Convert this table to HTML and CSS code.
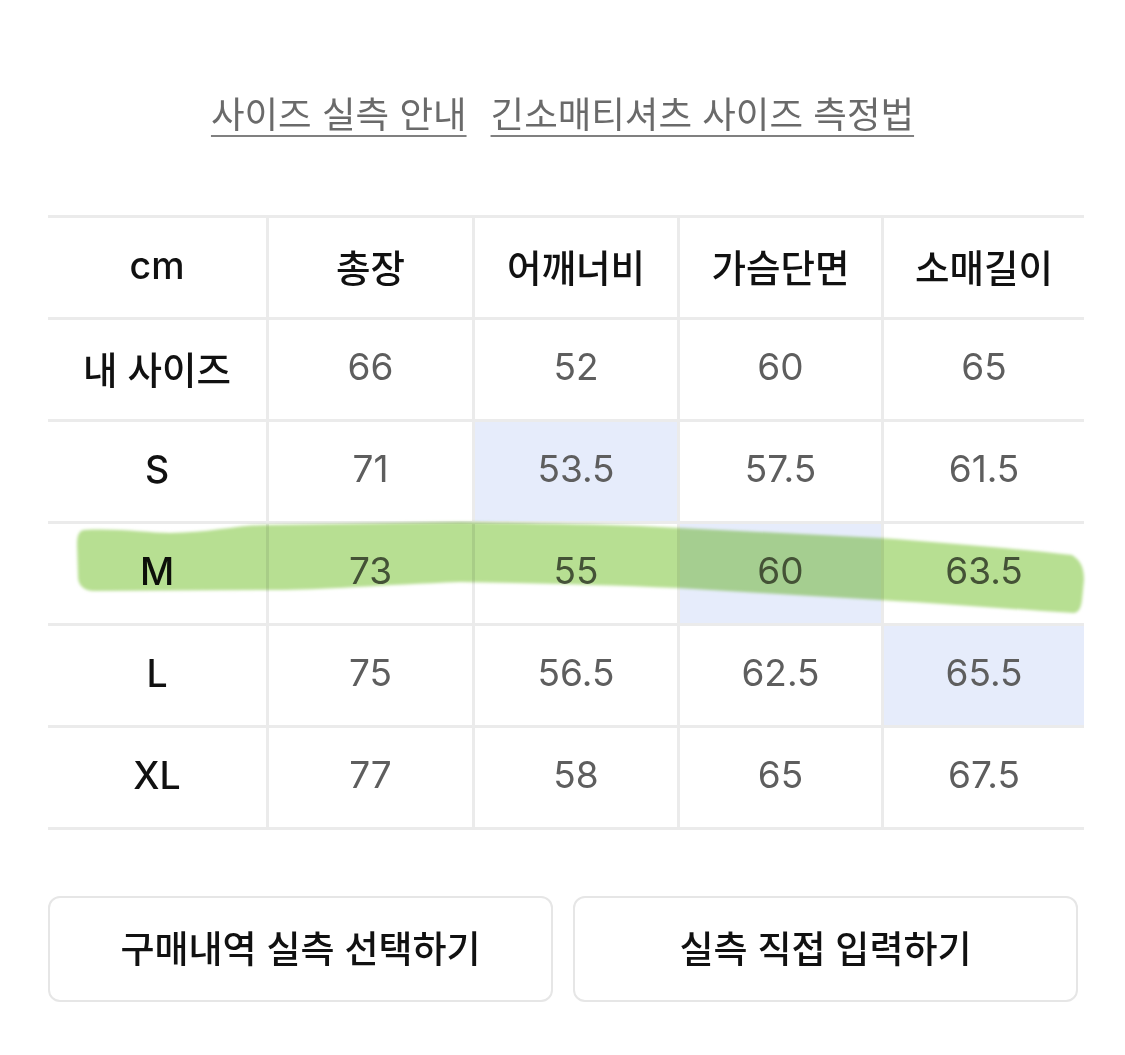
FILE: index.html
```html
<!DOCTYPE html>
<html lang="ko">
<head>
<meta charset="utf-8">
<title>사이즈 실측</title>
<link rel="stylesheet" href="styles.css">
</head>
<body>
<div class="page">
  <nav class="links">
    <a class="link" href="#">사이즈 실측 안내</a>
    <a class="link" href="#">긴소매티셔츠 사이즈 측정법</a>
  </nav>

  <div class="table-wrap">
    <div class="size-table">
      <div class="cell head first">cm</div>
      <div class="cell head">총장</div>
      <div class="cell head">어깨너비</div>
      <div class="cell head">가슴단면</div>
      <div class="cell head">소매길이</div>

      <div class="cell head first">내 사이즈</div>
      <div class="cell val">66</div>
      <div class="cell val">52</div>
      <div class="cell val">60</div>
      <div class="cell val">65</div>

      <div class="cell head first">S</div>
      <div class="cell val">71</div>
      <div class="cell val hl">53.5</div>
      <div class="cell val">57.5</div>
      <div class="cell val">61.5</div>

      <div class="cell head first">M</div>
      <div class="cell val">73</div>
      <div class="cell val">55</div>
      <div class="cell val hl">60</div>
      <div class="cell val">63.5</div>

      <div class="cell head first">L</div>
      <div class="cell val">75</div>
      <div class="cell val">56.5</div>
      <div class="cell val">62.5</div>
      <div class="cell val hl">65.5</div>

      <div class="cell head first last">XL</div>
      <div class="cell val last">77</div>
      <div class="cell val last">58</div>
      <div class="cell val last">65</div>
      <div class="cell val last">67.5</div>
    </div>

    <svg class="marker" width="1040" height="612" viewBox="0 0 1040 612" aria-hidden="true">
      <defs>
        <filter id="soft" x="-5%" y="-50%" width="110%" height="200%">
          <feGaussianBlur stdDeviation="1.6"/>
        </filter>
      </defs>
      <path filter="url(#soft)" fill="#b7df92"
        d="M36 315 C70 313 100 318 122 318 C160 318 190 310 218 310 L412 307 C480 308 540 309 592 311 L832 323 C900 328 970 334 1024 340 C1034 346 1036 355 1036 365 L1034 385 C1033 393 1031 397 1026 398 C960 394 900 389 832 385 L629 373 C560 370 480 368 412 367 C330 370 260 376 218 375 L46 376 C36 376 30 370 30 362 L29 330 C29 320 31 316 36 315 Z"/>
    </svg>
  </div>

  <div class="actions">
    <button class="btn" type="button">구매내역 실측 선택하기</button>
    <button class="btn" type="button">실측 직접 입력하기</button>
  </div>
</div>
</body>
</html>
```

FILE: styles.css
```css
* {
  box-sizing: border-box;
}

html, body {
  margin: 0;
  padding: 0;
  background: #ffffff;
}

body {
  font-family: "Inter", "Noto Sans CJK KR", "Noto Sans", sans-serif;
  color: #111111;
}

.page {
  width: 1125px;
  padding: 92px 0 0 48px;
}

.links {
  display: flex;
  justify-content: center;
  gap: 24px;
  width: 1029px;
  font-size: 36.5px;
  line-height: 46px;
}

.link {
  color: #6a6a6a;
  text-decoration: underline;
  text-decoration-thickness: 2px;
  text-underline-offset: 7px;
  text-decoration-color: #808080;
}

.table-wrap {
  position: relative;
  width: 1036px;
  margin-top: 77px;
}

.size-table {
  display: grid;
  grid-template-columns: 218px 206px 205px 204px 203px;
  grid-auto-rows: 102px;
}

.cell {
  display: flex;
  align-items: center;
  justify-content: center;
  border-top: 3px solid #ebebeb;
  border-left: 3px solid #ebebeb;
  padding-bottom: 4px;
}

.cell.first {
  border-left: none;
}

.cell.last {
  height: 105px;
  border-bottom: 3px solid #ebebeb;
}

.head {
  color: #111111;
  font-size: 37.5px;
  font-weight: 500;
}

.val {
  color: #5e5e5e;
  font-size: 37px;
  padding-bottom: 7px;
}

.hl {
  background: #e6ecfb;
}

.marker {
  position: absolute;
  left: 0;
  top: 0;
  overflow: visible;
  mix-blend-mode: multiply;
  pointer-events: none;
}

.actions {
  display: flex;
  gap: 20px;
  width: 1030px;
  margin-top: 69px;
}

.btn {
  flex: 1;
  height: 106px;
  background: #ffffff;
  border: 2px solid #e6e6e6;
  border-radius: 12px;
  font-family: "Inter", "Noto Sans CJK KR", sans-serif;
  font-size: 37px;
  font-weight: 500;
  color: #111111;
  padding: 0 0 4px;
}
```
